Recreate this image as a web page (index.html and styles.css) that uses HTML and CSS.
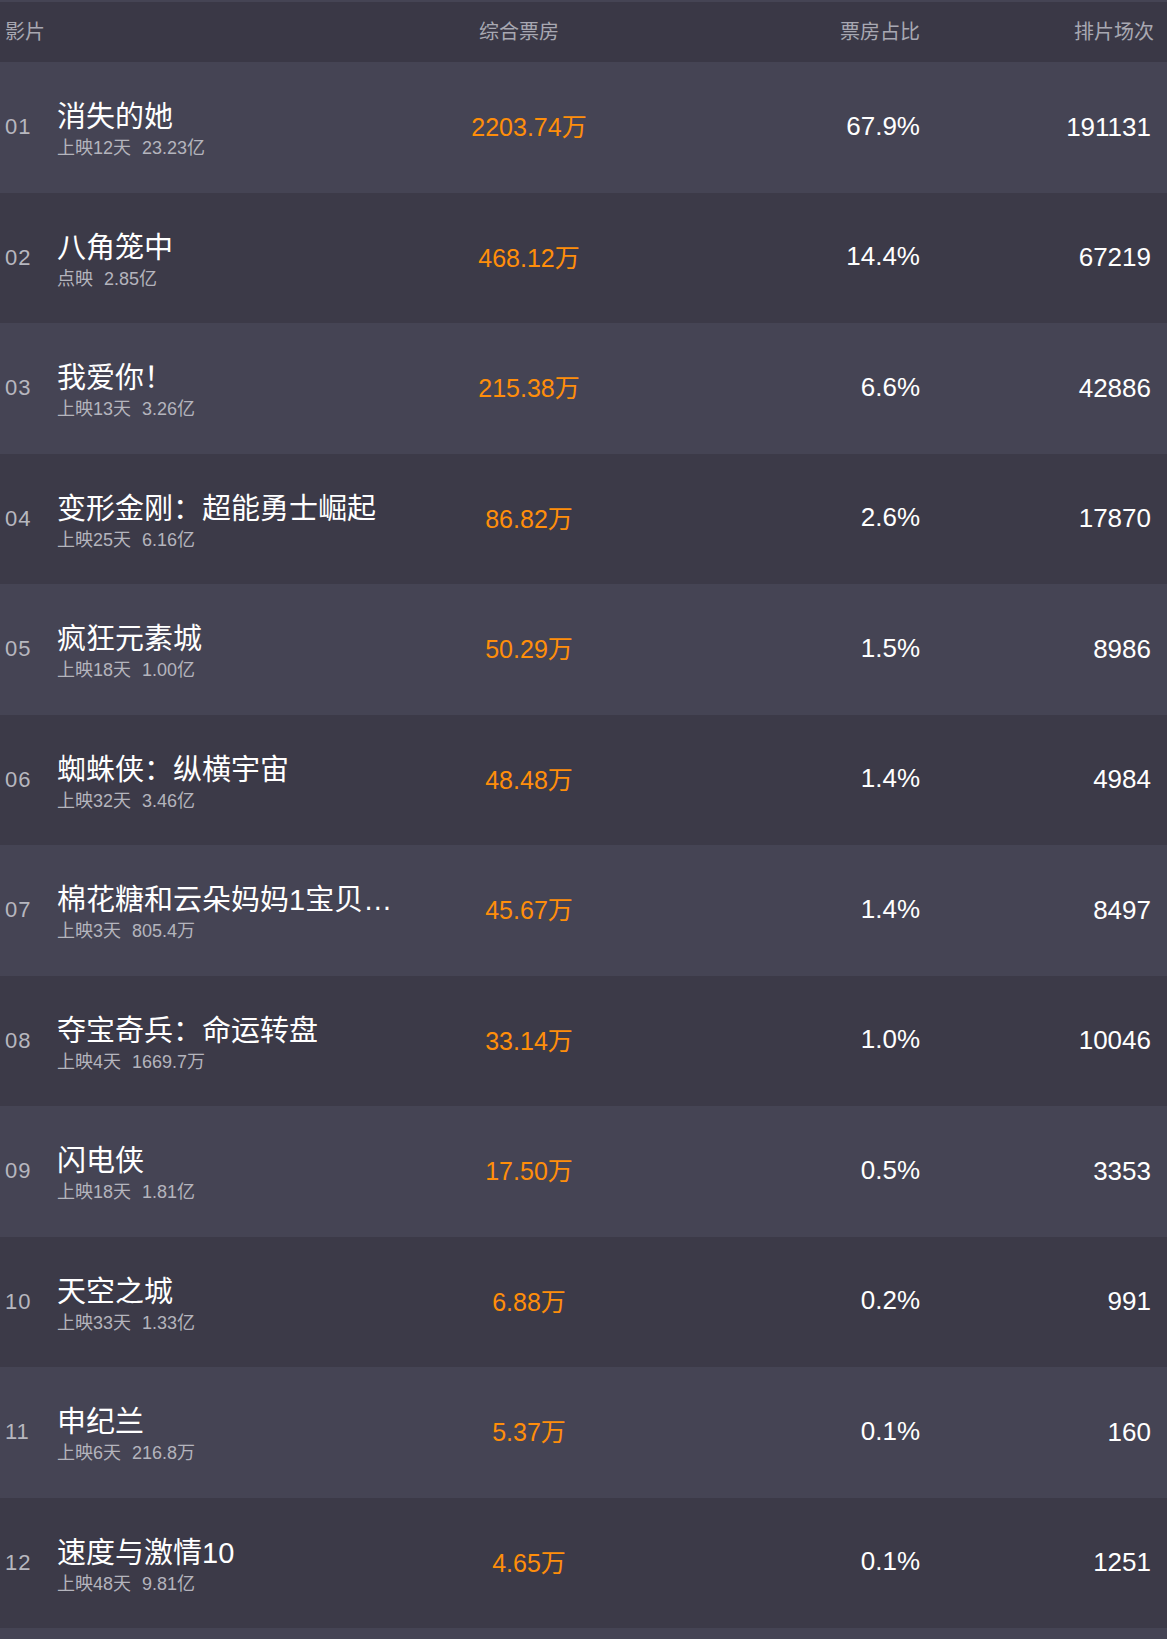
FILE: index.html
```html
<!DOCTYPE html>
<html lang="zh-CN">
<head>
<meta charset="utf-8">
<title>票房榜</title>
<link rel="stylesheet" href="styles.css">
</head>
<body>
<div class="board">
  <div class="head">
    <div class="h-film">影片</div>
    <div class="h-box">综合票房</div>
    <div class="h-pct">票房占比</div>
    <div class="h-count">排片场次</div>
  </div>
  <ul class="list">
    <li class="row">
      <span class="rank">01</span>
      <div class="film"><div class="name">消失的她</div><div class="meta"><span>上映12天</span><span class="sum">23.23亿</span></div></div>
      <span class="box">2203.74万</span>
      <span class="pct">67.9%</span>
      <span class="count">191131</span>
    </li>
    <li class="row">
      <span class="rank">02</span>
      <div class="film"><div class="name">八角笼中</div><div class="meta"><span>点映</span><span class="sum">2.85亿</span></div></div>
      <span class="box">468.12万</span>
      <span class="pct">14.4%</span>
      <span class="count">67219</span>
    </li>
    <li class="row">
      <span class="rank">03</span>
      <div class="film"><div class="name">我爱你！</div><div class="meta"><span>上映13天</span><span class="sum">3.26亿</span></div></div>
      <span class="box">215.38万</span>
      <span class="pct">6.6%</span>
      <span class="count">42886</span>
    </li>
    <li class="row">
      <span class="rank">04</span>
      <div class="film"><div class="name">变形金刚：超能勇士崛起</div><div class="meta"><span>上映25天</span><span class="sum">6.16亿</span></div></div>
      <span class="box">86.82万</span>
      <span class="pct">2.6%</span>
      <span class="count">17870</span>
    </li>
    <li class="row">
      <span class="rank">05</span>
      <div class="film"><div class="name">疯狂元素城</div><div class="meta"><span>上映18天</span><span class="sum">1.00亿</span></div></div>
      <span class="box">50.29万</span>
      <span class="pct">1.5%</span>
      <span class="count">8986</span>
    </li>
    <li class="row">
      <span class="rank">06</span>
      <div class="film"><div class="name">蜘蛛侠：纵横宇宙</div><div class="meta"><span>上映32天</span><span class="sum">3.46亿</span></div></div>
      <span class="box">48.48万</span>
      <span class="pct">1.4%</span>
      <span class="count">4984</span>
    </li>
    <li class="row">
      <span class="rank">07</span>
      <div class="film"><div class="name">棉花糖和云朵妈妈1宝贝芯计划</div><div class="meta"><span>上映3天</span><span class="sum">805.4万</span></div></div>
      <span class="box">45.67万</span>
      <span class="pct">1.4%</span>
      <span class="count">8497</span>
    </li>
    <li class="row">
      <span class="rank">08</span>
      <div class="film"><div class="name">夺宝奇兵：命运转盘</div><div class="meta"><span>上映4天</span><span class="sum">1669.7万</span></div></div>
      <span class="box">33.14万</span>
      <span class="pct">1.0%</span>
      <span class="count">10046</span>
    </li>
    <li class="row">
      <span class="rank">09</span>
      <div class="film"><div class="name">闪电侠</div><div class="meta"><span>上映18天</span><span class="sum">1.81亿</span></div></div>
      <span class="box">17.50万</span>
      <span class="pct">0.5%</span>
      <span class="count">3353</span>
    </li>
    <li class="row">
      <span class="rank">10</span>
      <div class="film"><div class="name">天空之城</div><div class="meta"><span>上映33天</span><span class="sum">1.33亿</span></div></div>
      <span class="box">6.88万</span>
      <span class="pct">0.2%</span>
      <span class="count">991</span>
    </li>
    <li class="row">
      <span class="rank">11</span>
      <div class="film"><div class="name">申纪兰</div><div class="meta"><span>上映6天</span><span class="sum">216.8万</span></div></div>
      <span class="box">5.37万</span>
      <span class="pct">0.1%</span>
      <span class="count">160</span>
    </li>
    <li class="row">
      <span class="rank">12</span>
      <div class="film"><div class="name">速度与激情10</div><div class="meta"><span>上映48天</span><span class="sum">9.81亿</span></div></div>
      <span class="box">4.65万</span>
      <span class="pct">0.1%</span>
      <span class="count">1251</span>
    </li>
  </ul>
</div>
</body>
</html>
```

FILE: styles.css
```css
html {
  background: #454454;
}
body {
  margin: 0;
  font-family: "Liberation Sans", "Noto Sans CJK SC", sans-serif;
  color: #ffffff;
}
.board {
  border-top: 2px solid #454454;
}
.head {
  display: flex;
  align-items: center;
  height: 60px;
  padding: 0 13px 0 5px;
  background: #3a3846;
  color: #a8a8b2;
  font-size: 20px;
  line-height: 24px;
}
.h-film {
  width: 405px;
}
.h-box {
  width: 238px;
  padding-right: 20px;
  box-sizing: border-box;
  text-align: center;
}
.h-pct {
  width: 272px;
  text-align: right;
}
.h-count {
  width: 234px;
  text-align: right;
}
.list {
  list-style: none;
  margin: 0;
  padding: 0;
}
.row {
  display: flex;
  align-items: center;
  height: 130.5px;
  padding: 0 16px 0 5px;
  background: #454454;
}
.row:nth-child(even) {
  background: #3c3a48;
}
.rank {
  width: 52px;
  flex: none;
  font-size: 22px;
  letter-spacing: 1px;
  color: #b7b7bf;
}
.film {
  width: 353px;
  flex: none;
  display: flex;
  flex-direction: column;
  gap: 3px;
  margin-top: 5px;
}
.name {
  max-width: 345px;
  font-size: 29px;
  line-height: 34px;
  white-space: nowrap;
  overflow: hidden;
  text-overflow: ellipsis;
}
.meta {
  font-size: 18px;
  line-height: 22px;
  color: #b4b4bd;
  white-space: nowrap;
}
.sum {
  margin-left: 11px;
}
.box {
  width: 238px;
  flex: none;
  text-align: center;
  font-size: 25px;
  color: #ff8e0a;
  margin-bottom: 4px;
}
.pct {
  width: 272px;
  flex: none;
  text-align: right;
  font-size: 26px;
  margin-bottom: 2px;
}
.count {
  width: 231px;
  flex: none;
  text-align: right;
  font-size: 26px;
}
```
